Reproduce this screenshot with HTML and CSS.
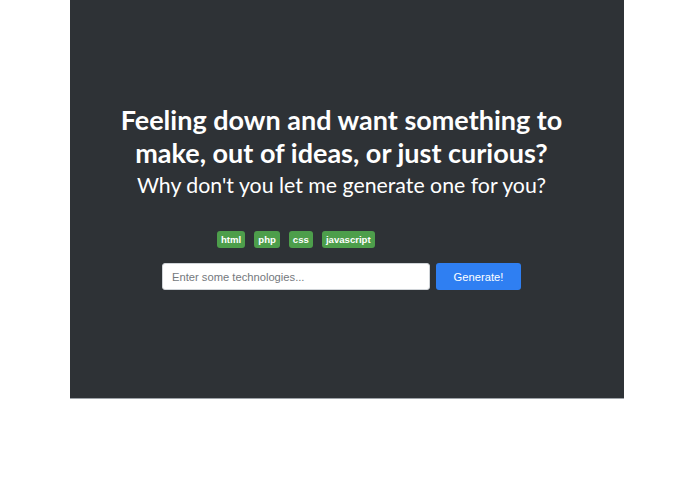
FILE: index.html
```html
<!DOCTYPE html>
<html>
<head>
<meta charset="utf-8">
<link rel="stylesheet" href="styles.css">
</head>
<body>
<section class="hero">
  <div class="hero-inner">
    <h1 class="title">Feeling down and want something to<br>make, out of ideas, or just curious?</h1>
    <p class="subtitle">Why don't you let me generate one for you?</p>
    <div class="tags">
      <span class="tag">html</span>
      <span class="tag">php</span>
      <span class="tag">css</span>
      <span class="tag">javascript</span>
    </div>
    <form class="search">
      <input class="search-input" type="text" placeholder="Enter some technologies...">
      <button class="search-btn" type="button">Generate!</button>
    </form>
  </div>
</section>
</body>
</html>
```
FILE: styles.css
```css
html, body {
  margin: 0;
  padding: 0;
  background: #ffffff;
}
.hero {
  margin-left: 70px;
  width: 554px;
  height: 398px;
  background: #2e3236;
  border-bottom: 1px solid #9ea3a8;
  box-sizing: content-box;
}
.hero-inner {
  width: 543px;
  padding-top: 103px;
  display: flex;
  flex-direction: column;
  align-items: center;
}
.title {
  margin: 0;
  font-family: Lato, "Open Sans", sans-serif;
  font-weight: 700;
  font-size: 27px;
  line-height: 33px;
  color: #ffffff;
  text-align: center;
}
.subtitle {
  margin: 2px 0 0 0;
  font-family: Lato, "Open Sans", sans-serif;
  font-weight: 400;
  font-size: 21.3px;
  line-height: 29px;
  color: #ffffff;
  text-align: center;
}
.tags {
  align-self: flex-start;
  margin-left: 147px;
  margin-top: 31px;
  display: flex;
  gap: 9px;
}
.tag {
  display: inline-block;
  background: #4d9e4b;
  color: #ffffff;
  font-family: "Liberation Sans", Arial, sans-serif;
  font-weight: 700;
  font-size: 9.6px;
  line-height: 17px;
  padding: 0 4px;
  border-radius: 3px;
}
.search {
  margin: 15px 0 0 0;
  display: flex;
  gap: 6px;
}
.search-input {
  width: 268px;
  height: 27px;
  box-sizing: border-box;
  border: 1px solid #d0d4d8;
  border-radius: 3px;
  padding: 0 9px;
  font-family: "Liberation Sans", Arial, sans-serif;
  font-size: 11.2px;
  color: #333;
  background: #fff;
  outline: none;
}
.search-input::placeholder {
  color: #74787d;
}
.search-btn {
  width: 85px;
  height: 27px;
  border: none;
  border-radius: 3px;
  background: #2f7ff2;
  color: #ffffff;
  font-family: "Liberation Sans", Arial, sans-serif;
  font-size: 11.2px;
  padding: 0;
  cursor: pointer;
}
```
